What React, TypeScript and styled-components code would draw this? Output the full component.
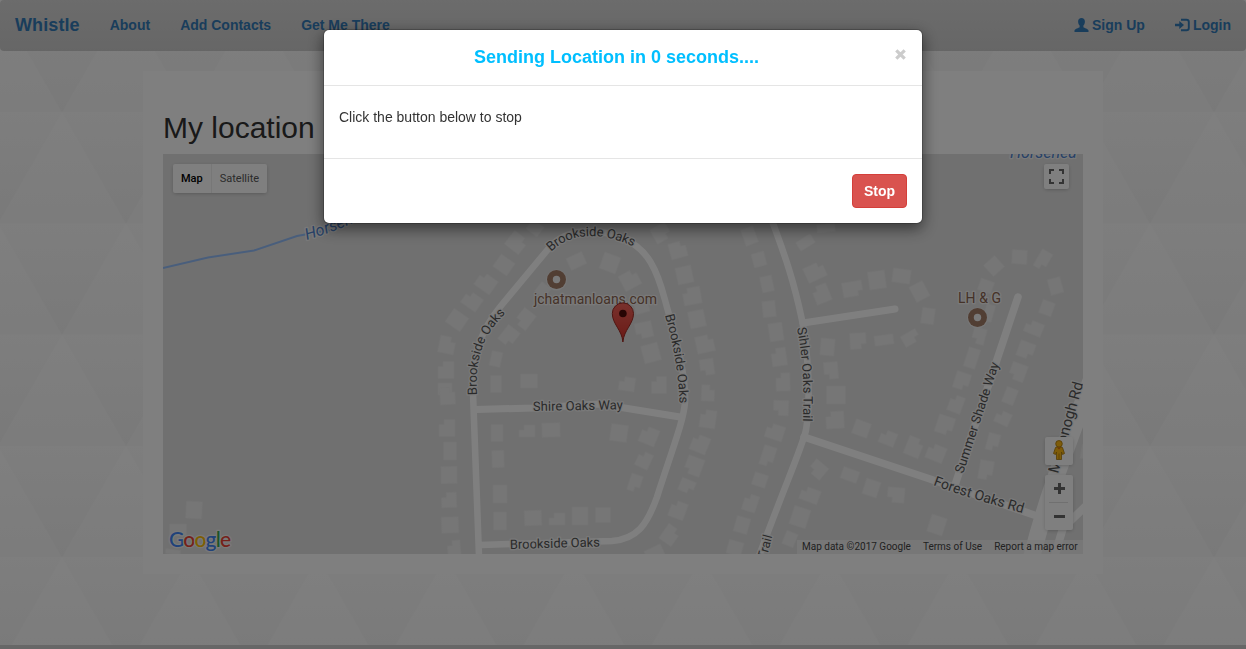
import React from "react";
import styled, { createGlobalStyle } from "styled-components";

const GlobalStyle = createGlobalStyle`
  * { box-sizing: border-box; }
  body {
    margin: 0;
    overflow: hidden;
    font-family: "Liberation Sans", Arial, sans-serif;
    font-size: 14px;
    line-height: 20px;
    color: #333;
    background: #fff;
  }
`;

const Page = styled.div`
  position: relative;
  display: flex;
  flex-direction: column;
  height: 100vh;
`;

const Backdrop = styled.svg`
  position: absolute;
  inset: 0;
  width: 100%;
  height: 100%;
  z-index: -1;
`;

const Navbar = styled.nav`
  flex: none;
  display: flex;
  justify-content: space-between;
  height: 51px;
  border-radius: 4px;
  background: linear-gradient(#d8d8d8, #cdcdcd);
`;

const NavGroup = styled.div`
  display: flex;
`;

const NavLink = styled.a<{ $brand?: boolean; $gap?: number }>`
  display: flex;
  align-items: center;
  gap: 3px;
  height: 50px;
  padding: 0 ${(p) => p.$gap ?? 15}px;
  font-weight: bold;
  font-size: ${(p) => (p.$brand ? 18 : 14)}px;
  letter-spacing: ${(p) => (p.$brand ? "0.1px" : "0")};
  color: #337ab7;
`;

const Main = styled.main`
  flex: 1;
  display: flex;
  flex-direction: column;
  align-items: center;
  padding-top: 20px;
`;

const Panel = styled.section`
  width: 960px;
  height: 503px;
  padding: 40px 20px 20px;
  background: #fff;
`;

const Heading = styled.h2`
  margin: 0 0 10px;
  font-size: 30px;
  font-weight: 400;
  line-height: 33px;
`;

const MapFrame = styled.div`
  position: relative;
  width: 920px;
  height: 400px;
  overflow: hidden;
  font-family: Roboto, sans-serif;
`;

const MapCanvas = styled.svg`
  display: block;
  width: 920px;
  height: 400px;
  font-family: Roboto, sans-serif;
`;

const MapTypes = styled.div`
  position: absolute;
  left: 10px;
  top: 10px;
  display: flex;
  height: 29px;
  border-radius: 2px;
  background: #fff;
  box-shadow: 0 1px 4px -1px rgba(0, 0, 0, 0.3);
`;

const MapType = styled.span<{ $active?: boolean }>`
  padding: 0 8px;
  font-size: 11px;
  line-height: 29px;
  font-weight: ${(p) => (p.$active ? 500 : 400)};
  color: ${(p) => (p.$active ? "#000" : "#565656")};
  & + & { border-left: 1px solid #eee; }
`;

const Control = styled.div<{ $top: number; $right: number; $w: number; $h: number }>`
  position: absolute;
  top: ${(p) => p.$top}px;
  right: ${(p) => p.$right}px;
  width: ${(p) => p.$w}px;
  height: ${(p) => p.$h}px;
  border-radius: 2px;
  background: #fff;
  box-shadow: 0 1px 4px -1px rgba(0, 0, 0, 0.3);
  svg { display: block; }
`;

const Attribution = styled.div`
  position: absolute;
  right: 0;
  bottom: 0;
  display: flex;
  gap: 12px;
  width: 286px;
  height: 14px;
  padding: 0 6px 0 5px;
  justify-content: space-between;
  font-size: 10px;
  line-height: 14px;
  white-space: nowrap;
  color: #444;
  background: rgba(245, 245, 245, 0.7);
`;

const Footer = styled.footer`
  flex: none;
  height: 4px;
  background: #cfcfcf;
`;

const Shade = styled.div`
  position: fixed;
  inset: 0;
  background: rgba(0, 0, 0, 0.5);
`;

const ModalLayer = styled.div`
  position: fixed;
  inset: 0;
  display: flex;
  justify-content: center;
  align-items: flex-start;
  padding-top: 29px;
`;

const Modal = styled.div`
  width: 600px;
  border: 1px solid rgba(0, 0, 0, 0.2);
  border-radius: 6px;
  background: #fff;
  background-clip: padding-box;
  box-shadow: 0 5px 15px rgba(0, 0, 0, 0.5);
`;

const ModalHeader = styled.header`
  display: flex;
  align-items: flex-start;
  height: 56px;
  padding: 15px;
  border-bottom: 1px solid #e5e5e5;
`;

const ModalTitle = styled.h4`
  flex: 1;
  margin: 0;
  text-align: center;
  font-size: 18px;
  line-height: 25px;
  font-weight: bold;
  color: #00bfff;
`;

const Close = styled.button`
  width: 13px;
  padding: 3px 0 0;
  border: 0;
  background: none;
  svg { display: block; }
`;

const ModalBody = styled.div`
  height: 72px;
  padding: 21px 15px 0;
`;

const ModalFooter = styled.footer`
  display: flex;
  justify-content: flex-end;
  height: 65px;
  padding: 15px;
  border-top: 1px solid #e5e5e5;
`;

const StopButton = styled.button`
  width: 55px;
  height: 34px;
  padding: 0;
  border: 1px solid #d43f3a;
  border-radius: 4px;
  font: bold 14px "Liberation Sans", Arial, sans-serif;
  color: #fff;
  background: #d9534f;
`;

/* Building footprints: centre x, centre y, width, height, rotation, corner notch (0-4) */
type Building = [number, number, number, number, number, number?];
const buildings: Building[] = [
  [535, 228, 14, 12, 38], [516.5, 242.5, 18, 17, 38, 2], [504, 265, 17, 15, 35], [486, 283, 19, 16, 35, 1],
  [472, 301, 18, 15, 35, 1], [457, 320, 18, 16, 35], [447, 345, 16, 17, 12, 2], [446, 370, 16, 17, 0, 1], [445, 389, 14, 12, 0],
  [576.5, 261, 17, 13, -25], [610, 263, 17, 17, 20], [630, 280, 18, 17, -28, 2], [543, 290, 12, 12, 38], [525, 319, 15, 18, 38, 4],
  [509, 336, 15, 18, 38, 3], [496, 359, 11, 15, 12], [496, 384, 11, 17, 0], [529, 381, 17, 14, 0],
  [627, 384, 16, 14, 8, 1], [644, 330, 17, 16, -12, 4], [651, 353, 17, 18, -15], [642, 308, 14, 10, -15], [659, 385, 15, 17, 0, 1],
  [661, 233, 17, 16, -30, 3], [678, 250, 17, 16, -15, 2], [684.5, 275, 16, 17, -12], [692, 296, 18, 17, -10, 1], [697, 319, 16, 17, -12],
  [705, 344, 18, 17, -12, 2], [707, 367, 14, 16, -8, 4], [708, 393, 13, 16, 3, 2], [708, 419, 16, 18, 8, 1], [700, 444, 17, 17, 22, 1],
  [694, 466, 17, 18, 20, 4], [687, 486, 15, 13, 22, 3], [678, 510, 16, 17, 20, 1], [670, 535, 15, 18, 35, 2], [655, 554, 18, 14, -25],
  [447.5, 396, 15, 17, -3, 2], [447, 428, 16, 17, 0, 1], [450, 451, 13, 18, 0], [449, 475, 16, 17, -1], [449, 500, 15, 15, -2, 1],
  [450, 525, 17, 16, -2], [454, 548, 13, 15, -5, 1],
  [497, 433, 12, 17, 0], [498, 459, 12, 17, -2], [500, 494, 14, 18, -1], [500, 521, 13, 18, 0], [527, 431, 16, 12, 0, 1], [551, 430, 18, 14, -2],
  [619, 433, 17, 17, 8], [649, 436, 17, 17, 22, 1], [644, 460, 14, 16, 25, 1], [635, 483, 12, 17, 18, 3], [533, 518, 17, 15, -2],
  [557, 519, 16, 12, 0, 1], [580, 516, 16, 18, 0], [603, 515, 15, 15, 0],
  [749.5, 236, 13, 17, -20], [759, 259.5, 13, 14, -15], [767, 284, 12, 16, -12], [769, 309, 13, 16, -6], [776, 332, 14, 18, -8],
  [779, 357, 15, 18, -8, 1], [783, 382, 14, 18, -2, 1], [781, 408, 15, 15, 2, 4], [775, 432, 18, 15, 18, 1], [768, 456, 13, 20, 18, 3],
  [760, 480, 14, 13, 18], [750.5, 503, 14, 17, 18, 1], [742, 525, 14, 16, 16], [735, 548, 15, 14, 15],
  [805.5, 242.5, 17, 10, -32], [826, 228, 18, 8, -5], [815, 272, 20, 16, -25, 2], [821.5, 294, 16, 18, -22, 1], [852.5, 289, 20, 15, -10, 3],
  [877, 280, 17, 18, -8], [901.5, 276, 18, 14, 8], [919.5, 291.5, 15, 17, -28], [928, 316, 13, 16, 8], [858, 341, 16, 16, -3, 3],
  [884, 340, 19, 10, -8], [910.5, 338, 17, 12, -30, 3], [827.5, 347, 14, 17, 5], [831, 370.5, 14, 17, -5, 4], [836, 395, 19, 18, 0],
  [835, 420, 18, 17, -3, 1], [861.5, 428.5, 16, 15, 20], [888, 438, 16, 14, 22, 1], [914, 447, 16, 19, 22, 2], [936, 453, 18, 16, 22, 1],
  [818, 469.5, 16, 15, 40, 4], [850, 475, 17, 12, 20], [871.5, 488, 15, 16, 18], [896, 495, 17, 15, 5, 4], [810, 495, 19, 14, 20, 1],
  [800, 517, 17, 19, 18], [790, 539, 12, 14, 22],
  [994, 266, 15, 15, -42], [1019.5, 257, 15, 14, 3], [1043, 260, 12, 19, 30, 3], [1055.5, 286, 13, 16, -15], [1047, 308, 13, 14, 20],
  [1034, 328, 18, 13, 22, 1], [1026, 350, 16, 16, 20, 3], [1018, 372, 16, 17, 20, 4], [1010, 396, 12, 16, 22], [1003, 418, 15, 13, 25, 1],
  [993, 442, 12, 17, 15, 3], [986, 470, 14, 19, 10, 3], [986, 286, 14, 12, 20], [989, 313, 9, 17, 16], [979, 336, 13, 16, 15, 4],
  [972, 358, 12, 20, 18], [962, 381, 15, 17, 18, 3], [956, 404, 14, 17, 20, 1], [945, 425, 17, 18, 18, 3], [937, 525, 16, 18, 18],
  [194, 510, 16, 17, 3], [178, 530, 17, 12, 0], [173, 552, 15, 5, 8], [1085, 452, 8, 14, 10],
];

const footprint = (w: number, h: number, notch = 0) => {
  const x = w / 2;
  const y = h / 2;
  const n = 5;
  const corners: string[] = [
    notch === 1 ? `${-x},${-y + n} ${-x + n},${-y + n} ${-x + n},${-y}` : `${-x},${-y}`,
    notch === 2 ? `${x - n},${-y} ${x - n},${-y + n} ${x},${-y + n}` : `${x},${-y}`,
    notch === 3 ? `${x},${y - n} ${x - n},${y - n} ${x - n},${y}` : `${x},${y}`,
    notch === 4 ? `${-x + n},${y} ${-x + n},${y - n} ${-x},${y - n}` : `${-x},${y}`,
  ];
  return corners.join(" ");
};

type Road = { d: string; w: number };
const roads: Road[] = [
  { d: "M479 556L473 393C472 362 477 335 500 307L549 248C566 228 598 227 624 239C648 249 657 270 665 300C673 330 686 370 685 402C684 420 672 450 657 497C647 525 637 539 612 541L480 545", w: 6.5 },
  { d: "M476 409.5L533 408L600 404L680 417", w: 7 },
  { d: "M771 218C786 258 794 282 802 320C808 350 811 400 806 430C803 445 785 485 759 556", w: 6.5 },
  { d: "M803 323L895 309", w: 7 },
  { d: "M804 437L930 479L1034 515", w: 7.5 },
  { d: "M1018 297L955 485", w: 7.5 },
  { d: "M1032 556C1045 505 1056 475 1095 370", w: 17 },
  { d: "M1054 558L1063 528L1088 504", w: 8 },
];

type Street = { id: string; d: string; text: string; size: number; len: number; water?: boolean };
const streets: Street[] = [
  { id: "top", d: "M551 252C572 231 604 231 640 250", text: "Brookside Oaks", size: 13, len: 88 },
  { id: "west", d: "M477 395C475 358 482 335 508 311", text: "Brookside Oaks", size: 13, len: 90 },
  { id: "east", d: "M665 315C673 345 678 365 680 412", text: "Brookside Oaks", size: 13, len: 90 },
  { id: "shire", d: "M533 411L640 409", text: "Shire Oaks Way", size: 13, len: 90 },
  { id: "south", d: "M510 549L620 546", text: "Brookside Oaks", size: 13, len: 90 },
  { id: "sihler", d: "M797 328C803 360 805 390 802 440", text: "Sihler Oaks Trail", size: 13, len: 94 },
  { id: "trail", d: "M770 555L785 508", text: "", size: 13, len: 0 },
  { id: "summer", d: "M963 474L1010 331", text: "Summer Shade Way", size: 13, len: 116 },
  { id: "forest", d: "M933 485C960 495 990 504 1040 518", text: "Forest Oaks Rd", size: 14, len: 94 },
  { id: "mcd", d: "M1058 474L1094 345", text: "McDonogh Rd", size: 15, len: 94 },
  { id: "creek", d: "M307 240C330 233 360 222 400 200", text: "Horsehead Branch", size: 16, len: 128, water: true },
];

const MapLabel = styled.text<{ $tone?: string }>`
  fill: ${(p) => p.$tone ?? "#555"};
  stroke: #f3f3f3;
  stroke-width: 2.5px;
  stroke-linejoin: round;
  paint-order: stroke;
`;

const Place = ({ x, y }: { x: number; y: number }) => (
  <g>
    <circle cx={x} cy={y + 0.5} r={10.4} fill="#eee" />
    <circle cx={x} cy={y} r={9.5} fill="#a37c66" />
    <circle cx={x} cy={y} r={3.7} fill="#f3f3f3" />
  </g>
);

const NeighborhoodMap = () => (
  <MapCanvas viewBox="163 154 920 400">
    <defs>
      <linearGradient id="pin" x1="0" y1="0" x2="0" y2="1">
        <stop offset="0" stopColor="#f2635a" />
        <stop offset="1" stopColor="#d5332b" />
      </linearGradient>
      {streets.map((s) => <path key={s.id} id={`street-${s.id}`} d={s.d} />)}
    </defs>
    <rect x="163" y="154" width="920" height="400" fill="#e1e1e1" />
    {buildings.map(([x, y, w, h, r, notch], i) => (
      <polygon key={i} points={footprint(w, h, notch)} transform={`translate(${x} ${y}) rotate(${r})`} fill="#ececec" stroke="#e7e7e7" strokeWidth=".5" />
    ))}
    <path d="M163 268L208 257.500L254 250.500L297 236L330 230" fill="none" stroke="#93bdf8" strokeWidth="2" />
    {roads.map((r) => (
      <path key={r.d} d={r.d} fill="none" stroke="#fff" strokeWidth={r.w} strokeLinecap="round" />
    ))}
    {streets.filter((s) => s.text).map((s) => (
      <MapLabel key={s.id} fontSize={s.size} fontStyle={s.water ? "italic" : "normal"} $tone={s.water ? "#4f83cf" : undefined}>
        <textPath href={`#street-${s.id}`} textLength={s.len}>{s.text}</textPath>
      </MapLabel>
    ))}
    <MapLabel x="766" y="560" fontSize="13" transform="rotate(-75 766 560)">Trail</MapLabel>
    <MapLabel x="1010" y="157.500" fontSize="16" fontStyle="italic" $tone="#4f83cf">Horsehea</MapLabel>
    <Place x={556.5} y={279.5} />
    <MapLabel x="534" y="304" fontSize="14" textLength="123" $tone="#8a6450">jchatmanloans.com</MapLabel>
    <Place x={977.5} y={317.5} />
    <MapLabel x="958" y="303" fontSize="14" textLength="43" $tone="#8a6450">LH &amp; G</MapLabel>
    <path d="M622.900 342C622 330 612.300 324 612.300 313.500A10.600 10.600 0 0 1 633.500 313.500C633.500 324 623.800 330 622.900 342Z" fill="url(#pin)" stroke="#9e2a22" strokeWidth="1" />
    <circle cx="622.900" cy="313.500" r="3.800" fill="#4d0b08" />
    <MapLabel x="169" y="546.500" fontSize="21" fontFamily="Lato" fontWeight="500" textLength="62">
      <tspan fill="#4285f4">G</tspan>
      <tspan fill="#ea4335">o</tspan>
      <tspan fill="#fbbc05">o</tspan>
      <tspan fill="#4285f4">g</tspan>
      <tspan fill="#34a853">l</tspan>
      <tspan fill="#ea4335">e</tspan>
    </MapLabel>
  </MapCanvas>
);

const UserIcon = () => (
  <svg width="15" height="14" viewBox="0 0 15 14" fill="#337ab7">
    <path d="M7.500 0C9.600 0 10.900 1.400 10.900 3.500C10.900 5.200 10.400 6.500 9.400 7.500V9.200C10 9.900 14.500 10.700 14.500 12.600V14H.5V12.600C.5 10.700 5 9.900 5.600 9.200V7.500C4.600 6.500 4.100 5.200 4.100 3.500C4.100 1.400 5.400 0 7.500 0Z" />
  </svg>
);

const LoginIcon = () => (
  <svg width="15" height="14" viewBox="0 0 15 14">
    <path d="M6 1.700H11.500Q13.800 1.700 13.800 4V10Q13.800 12.300 11.500 12.300H6" fill="none" stroke="#337ab7" strokeWidth="1.900" />
    <path d="M0 5.700H4.300V3L9 7L4.300 11V8.300H0Z" fill="#337ab7" />
  </svg>
);

export default function App() {
  return (
    <>
      <GlobalStyle />
      <Page>
        <Backdrop>
          <defs>
            <linearGradient id="up" x1="0" y1="0" x2="0" y2="1">
              <stop offset="0" stopColor="#ffffff" />
              <stop offset="1" stopColor="#f8f8f8" />
            </linearGradient>
            <linearGradient id="down" x1="0" y1="0" x2="0" y2="1">
              <stop offset="0" stopColor="#fcfcfc" />
              <stop offset="1" stopColor="#f3f3f3" />
            </linearGradient>
            <pattern id="triangles" x="-2" y="1" width="128" height="222.500" patternUnits="userSpaceOnUse">
              <rect width="128" height="111.250" fill="url(#up)" />
              <rect y="111.250" width="128" height="111.250" fill="url(#up)" />
              <path d="M0 0H128L64 111.250Z" fill="url(#down)" />
              <path d="M-64 111.250H64L0 222.500Z" fill="url(#down)" />
              <path d="M64 111.250H192L128 222.500Z" fill="url(#down)" />
            </pattern>
          </defs>
          <rect width="100%" height="100%" fill="url(#triangles)" />
        </Backdrop>
        <Navbar>
          <NavGroup>
            <NavLink $brand>Whistle</NavLink>
            <NavLink>About</NavLink>
            <NavLink>Add Contacts</NavLink>
            <NavLink>Get Me There</NavLink>
          </NavGroup>
          <NavGroup>
            <NavLink><UserIcon />Sign Up</NavLink>
            <NavLink><LoginIcon />Login</NavLink>
          </NavGroup>
        </Navbar>
        <Main>
          <Panel>
            <Heading>My location</Heading>
            <MapFrame>
              <NeighborhoodMap />
              <MapTypes>
                <MapType $active>Map</MapType>
                <MapType>Satellite</MapType>
              </MapTypes>
              <Control $top={10} $right={14} $w={25} $h={25}>
                <svg width="25" height="25" viewBox="0 0 25 25" fill="none" stroke="#666" strokeWidth="2">
                  <path d="M6 10V6H10M15 6H19V10M19 15V19H15M10 19H6V15" />
                </svg>
              </Control>
              <Control $top={283} $right={10} $w={28} $h={28}>
                <svg width="28" height="28" viewBox="0 0 28 28">
                  <path d="M10.500 10.500Q14 8.500 17.500 10.500L19.500 16.500L17.500 17.500L16.500 15V22.500H11.500V15L10.500 17.500L8.500 16.500Z" fill="#fdb813" stroke="#a8790b" strokeWidth=".8" />
                  <path d="M14 16.500V22" stroke="#a8790b" strokeWidth=".8" />
                  <path d="M12 10.500L14 12.500L16 10.500Z" fill="#e06a10" />
                  <circle cx="14" cy="6.800" r="3.300" fill="#fdb813" stroke="#a8790b" strokeWidth=".8" />
                </svg>
              </Control>
              <Control $top={321} $right={10} $w={28} $h={55}>
                <svg width="28" height="55" viewBox="0 0 28 55" stroke="#666" strokeWidth="3">
                  <path d="M9 13.500H20M14.500 8V19M9 41.500H20" />
                  <path d="M4 27.500H23" stroke="#e0e0e0" strokeWidth="1" />
                </svg>
              </Control>
              <Attribution>
                <span>Map data ©2017 Google</span>
                <span>Terms of Use</span>
                <span>Report a map error</span>
              </Attribution>
            </MapFrame>
          </Panel>
        </Main>
        <Footer />
      </Page>
      <Shade />
      <ModalLayer>
        <Modal role="dialog">
          <ModalHeader>
            <ModalTitle>Sending Location in 0 seconds....</ModalTitle>
            <Close aria-label="Close">
              <svg width="13" height="13" viewBox="0 0 13 13" stroke="#ccc" strokeWidth="3.200">
                <path d="M2.300 1.300L10.700 9.700M10.700 1.300L2.300 9.700" transform="translate(0 1)" />
              </svg>
            </Close>
          </ModalHeader>
          <ModalBody>Click the button below to stop</ModalBody>
          <ModalFooter>
            <StopButton>Stop</StopButton>
          </ModalFooter>
        </Modal>
      </ModalLayer>
    </>
  );
}
